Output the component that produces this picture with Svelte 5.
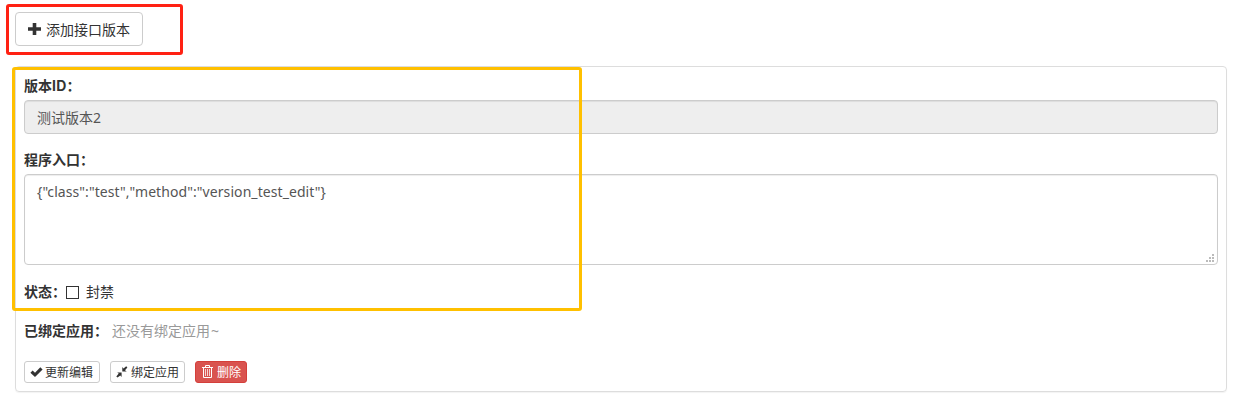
<script>
  let entry = $state('{"class":"test","method":"version_test_edit"}');
  let banned = $state(false);
</script>

<main>
  <button class="btn add">
    <svg width="14" height="14" viewBox="0 0 14 14"><path d="M4.7 1h3.6v4.2H13v3.6H8.3V13H4.7V8.8H0V5.2h4.7z" fill="#333" /></svg>
    <span>添加接口版本</span>
  </button>

  <section class="panel">
    <label class="title" for="version">版本<span class="latin">ID</span>：</label>
    <input id="version" class="control" value="测试版本2" readonly />

    <label class="title second" for="entry">程序入口：</label>
    <div class="area">
      <textarea id="entry" class="control" spellcheck="false" bind:value={entry}></textarea>
      <svg class="grip" width="8" height="8" viewBox="0 0 8 8" fill="#bbb">
        <path d="M6 0h2v2H6zM3 3h2v2H3zM6 3h2v2H6zM0 6h2v2H0zM3 6h2v2H3zM6 6h2v2H6z" />
      </svg>
    </div>

    <div class="status">
      <b>状态：</b>
      <label><input type="checkbox" bind:checked={banned} /><span>封禁</span></label>
    </div>

    <div class="bound"><b>已绑定应用：</b><span>还没有绑定应用<span class="tilde">~</span></span></div>

    <div class="actions">
      <button class="btn small update">
        <svg width="13" height="12" viewBox="0 0 13 12"><path d="M0.4 6.7 2.6 4.4 5 6.7 10.3 1.2 12.6 3.4 5 11.1z" fill="#333" /></svg>
        <span>更新编辑</span>
      </button>
      <button class="btn small bind">
        <svg width="12" height="12" viewBox="0 0 12 12" fill="#333">
          <path d="M6.3 1.1 7.5 2.6 10.2.3 11.4 1.5 9 4.3 10.7 5.5H6.3zM1.2 6.4h4.4v4.5L4.3 9.4 1.5 11.6.3 10.4 2.7 7.6z" />
        </svg>
        <span>绑定应用</span>
      </button>
      <button class="btn small danger">
        <svg width="12" height="13" viewBox="0 0 12 13" fill="none" stroke="#fff">
          <path d="M0 2.5h11M3.5 2V.5h4V2M1.5 3v9.5h8V3" />
          <path d="M3.5 4v7M5.5 4v7M7.5 4v7" stroke-opacity=".75" />
        </svg>
        <span>删除</span>
      </button>
    </div>
  </section>

  <div class="mark red"></div>
  <div class="mark yellow"></div>
</main>

<style>
  :global(body) { background: #fff; }
  main {
    position: relative;
    box-sizing: border-box;
    height: 400px;
    padding: 12px 11px 0 15px;
    overflow: hidden;
    color: #333;
    font: 14px/20px "Noto Sans", "Noto Sans CJK SC", sans-serif;
  }
  button, input, textarea { box-sizing: border-box; margin: 0; font: inherit; color: inherit; }
  svg { display: block; flex: none; }
  .btn {
    display: flex;
    align-items: center;
    border: 1px solid #ccc;
    border-radius: 4px;
    background: #fff;
    white-space: nowrap;
  }
  .btn span { padding-top: 2px; }
  .add { width: 128px; height: 34px; padding: 0 0 0 12px; gap: 4px; }
  .panel {
    box-sizing: border-box;
    height: 326px;
    margin-top: 20px;
    padding: 9px 8px 0;
    border: 1px solid #ddd;
    border-radius: 4px;
    box-shadow: 0 1px 1px rgba(0, 0, 0, .05);
  }
  .title { display: block; height: 20px; margin-bottom: 4px; font-weight: 700; }
  .latin { font-family: Inter, sans-serif; letter-spacing: .2px; }
  .second { margin-top: 16px; }
  .control {
    display: block;
    width: 100%;
    height: 34px;
    padding: 6px 12px;
    border: 1px solid #ccc;
    border-radius: 4px;
    outline: none;
    color: #555;
    background: #fff;
    box-shadow: inset 0 1px 1px rgba(0, 0, 0, .075);
  }
  input.control { background: #eee; }
  .area { position: relative; }
  textarea.control { height: 91px; padding-top: 7px; letter-spacing: .075px; resize: none; overflow: hidden; }
  .grip { position: absolute; right: 4px; bottom: 3px; }
  .status { display: flex; height: 20px; margin-top: 17px; }
  .status label { display: flex; align-items: center; }
  .status b { width: 42px; }
  .status input {
    appearance: none;
    width: 13px;
    height: 13px;
    margin: 0 7px 0 0;
    border: 1px solid #333;
    background: #fff;
  }
  .status input:checked { background: #333; box-shadow: inset 0 0 0 2px #fff; }
  .bound { display: flex; height: 20px; margin-top: 19px; }
  .bound b { width: 88px; }
  .bound span { color: #999; }
  .tilde { margin-left: 1px; }
  .actions { display: flex; gap: 10px; margin-top: 20px; }
  .small { height: 22px; padding: 0 0 0 5px; border-radius: 3px; font-size: 12px; line-height: 18px; gap: 3px; }
  .update { width: 76px; gap: 2px; }
  .bind { width: 75px; }
  .danger { width: 52px; padding-left: 6px; color: #fff; background: #d9534f; border-color: #d43f3a; }
  .danger svg { margin-top: -2px; }
  .mark { position: absolute; box-sizing: border-box; border-radius: 3px; pointer-events: none; }
  .red { left: 6px; top: 4px; width: 177px; height: 51px; border: 3px solid #ff2113; }
  .yellow { left: 12px; top: 67px; width: 570px; height: 244px; border: 3px solid #ffc000; }
</style>
